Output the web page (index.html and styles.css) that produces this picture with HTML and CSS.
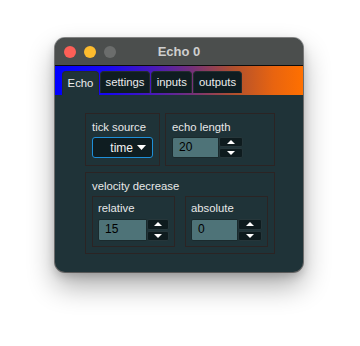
FILE: index.html
```html
<!DOCTYPE html>
<html>
<head>
<meta charset="utf-8">
<link rel="stylesheet" href="styles.css">
</head>
<body>
<div class="window">
  <div class="titlebar">
    <div class="lights">
      <span class="light red"></span>
      <span class="light yellow"></span>
      <span class="light gray"></span>
    </div>
    <div class="title">Echo 0</div>
    <div></div>
  </div>
  <div class="tabbar">
    <div class="tab active">Echo</div>
    <div class="tab">settings</div>
    <div class="tab">inputs</div>
    <div class="tab">outputs</div>
  </div>
  <div class="content">
    <div class="row top">
      <div class="box tick">
        <div class="label">tick source</div>
        <div class="combo"><span>time</span><svg width="9" height="5" viewBox="0 0 9 5"><path d="M0 0H9L4.5 5Z" fill="#fff"/></svg></div>
      </div>
      <div class="box echo">
        <div class="label">echo length</div>
        <div class="spin">
          <div class="field">20</div>
          <div class="btns">
            <div class="btn"><svg width="8" height="4" viewBox="0 0 8 4"><path d="M0 4H8L4 0Z" fill="#fff"/></svg></div>
            <div class="btn"><svg width="8" height="4" viewBox="0 0 8 4"><path d="M0 0H8L4 4Z" fill="#fff"/></svg></div>
          </div>
        </div>
      </div>
    </div>
    <div class="box velocity">
      <div class="label">velocity decrease</div>
      <div class="row sub">
        <div class="box small rel">
          <div class="label">relative</div>
          <div class="spin">
            <div class="field">15</div>
            <div class="btns">
              <div class="btn"><svg width="8" height="4" viewBox="0 0 8 4"><path d="M0 4H8L4 0Z" fill="#fff"/></svg></div>
              <div class="btn"><svg width="8" height="4" viewBox="0 0 8 4"><path d="M0 0H8L4 4Z" fill="#fff"/></svg></div>
            </div>
          </div>
        </div>
        <div class="box small abs">
          <div class="label">absolute</div>
          <div class="spin">
            <div class="field">0</div>
            <div class="btns">
              <div class="btn"><svg width="8" height="4" viewBox="0 0 8 4"><path d="M0 4H8L4 0Z" fill="#fff"/></svg></div>
              <div class="btn"><svg width="8" height="4" viewBox="0 0 8 4"><path d="M0 0H8L4 4Z" fill="#fff"/></svg></div>
            </div>
          </div>
        </div>
      </div>
    </div>
  </div>
</div>
</body>
</html>
```
FILE: styles.css
```css
* { box-sizing: border-box; }
html, body { margin: 0; padding: 0; background: #ffffff; }
body {
  min-height: 346px;
  padding: 38px 0 0 55px;
  font-family: "Liberation Sans", Arial, sans-serif;
  font-size: 11.3px;
  color: #e8e8e8;
}
.window {
  width: 248px;
  height: 234px;
  border-radius: 10px;
  overflow: hidden;
  background: #1f3338;
  box-shadow: 0 0 0 1px rgba(0,0,0,0.45), 0 14px 28px rgba(0,0,0,0.33), 0 4px 10px rgba(0,0,0,0.18);
  display: flex;
  flex-direction: column;
}
.titlebar {
  height: 28px;
  background: #4b4e4d;
  border-bottom: 1px solid #0c0c0c;
  display: grid;
  grid-template-columns: 1fr auto 1fr;
  align-items: center;
}
.lights { display: flex; gap: 8px; padding-left: 9px; }
.light { width: 12px; height: 12px; border-radius: 50%; display: block; }
.red { background: #fe5f57; }
.yellow { background: #febc2e; }
.gray { background: #6b6d6c; }
.title {
  font-weight: bold;
  font-size: 13px;
  color: #cfcfcf;
}
.tabbar {
  height: 29px;
  background: linear-gradient(to right, #0000ff 0%, #1a08f0 22%, #4a1ab8 40%, #74307a 55%, #b0502e 72%, #e86410 88%, #ff7000 100%);
  display: flex;
  align-items: flex-end;
  gap: 1px;
  padding: 0 0 0 7px;
}
.tab {
  height: 22px;
  margin-bottom: 2px;
  padding: 0 4.6px;
  line-height: 21px;
  background: #0f1d21;
  border: 1px solid #232c2e;
  border-bottom: none;
  border-radius: 4px 4px 0 0;
  color: #ececec;
}
.tab.active {
  height: 24px;
  margin-bottom: 0;
  background: #1f3338;
  line-height: 23px;
}
.content {
  flex: 1;
  padding: 18px 28px 0 30px;
  display: flex;
  flex-direction: column;
  gap: 6px;
}
.row { display: flex; }
.row.top { gap: 5px; }
.box {
  border: 1px solid #2b2424;
}
.label { line-height: 15px; color: #e8e8e8; white-space: nowrap; }
.tick { width: 75px; height: 53px; padding: 6px 6px; }
.echo { width: 110px; height: 53px; padding: 6px 6px; }
.combo {
  margin-top: 2px;
  width: 61px;
  height: 21px;
  border: 1px solid #1f8fd8;
  border-radius: 3px;
  background: #0f1d21;
  display: flex;
  align-items: center;
  justify-content: flex-end;
  gap: 4px;
  padding-right: 6px;
  font-size: 12px;
  color: #f2f2f2;
}
.spin {
  margin-top: 2px;
  width: 71px;
  height: 21px;
  display: flex;
}
.field {
  width: 47px;
  height: 100%;
  background: #4e7378;
  border: 1px solid #1a2a2d;
  border-radius: 2px 0 0 2px;
  padding-left: 6px;
  font-size: 12px;
  line-height: 19px;
  color: #000000;
}
.btns {
  flex: 1;
  display: flex;
  flex-direction: column;
  gap: 1px;
}
.btn {
  flex: 1;
  background: #0e1b1e;
  border: 1px solid #26363a;
  border-radius: 2px;
  display: flex;
  align-items: center;
  justify-content: center;
}
.velocity { height: 82px; padding: 6px 6px; }
.row.sub { gap: 10px; margin-top: 2px; }
.small { height: 51px; padding: 4px 5px; }
.rel { width: 84px; }
.abs { width: 83px; }
.small .spin { margin-top: 3px; height: 22px; }
.rel .field { width: 49px; }
.abs .field { width: 47px; }
```
